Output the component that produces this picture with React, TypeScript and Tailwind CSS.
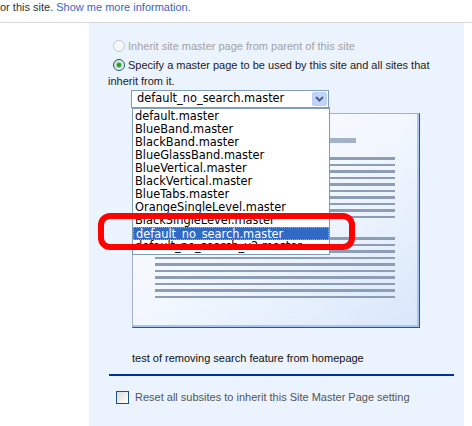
const masters = [
  "default.master",
  "BlueBand.master",
  "BlackBand.master",
  "BlueGlassBand.master",
  "BlueVertical.master",
  "BlackVertical.master",
  "BlueTabs.master",
  "OrangeSingleLevel.master",
  "BlackSingleLevel.master",
  "default_no_search.master",
  "default_no_search_v2.master",
];

function Radio({ checked, disabled }: { checked?: boolean; disabled?: boolean }) {
  return (
    <span
      className={
        "flex h-[12px] w-[12px] shrink-0 items-center justify-center rounded-full border " +
        (disabled
          ? "border-[#c4ccd6] bg-[#f4f6f8]"
          : "border-[#1c5180] bg-gradient-to-br from-[#dcdcd6] to-white")
      }
    >
      {checked && <span className="h-[4px] w-[4px] rounded-full bg-[#21a121] shadow-[0_0_0_1px_#7fcf7f]" />}
    </span>
  );
}

function Lines() {
  return (
    <div className="flex flex-col gap-[4px]">
      {Array.from({ length: 10 }).map((_, i) => (
        <div key={i} className={(i % 2 === 0 ? "h-[3px]" : "h-[2px]") + " w-[240px] bg-[#8e9db6]"} />
      ))}
    </div>
  );
}

export default function App() {
  return (
    <div className="relative h-[426px] w-[472px] overflow-hidden bg-white font-['Liberation_Sans',Arial,sans-serif] text-[11px] text-[#333]">
      <div className="h-[23px] border-b border-[#d6d6d6] leading-[15px]">
        or this site. <span className="text-[#3966bf]">Show me more information.</span>
      </div>

      <div className="flex h-[403px]">
        <div className="w-[89px]" />
        <div className="w-[375px] bg-[#ebf3ff] pt-[15px]">
          <div className="flex h-[16px] items-center pl-[24px] text-[#a2a2a2]">
            <Radio disabled />
            <span className="ml-[3px]">Inherit site master page from parent of this site</span>
          </div>
          <div className="mt-[3px] flex h-[16px] items-center pl-[24px] text-[#222]">
            <Radio checked />
            <span className="ml-[3px]">Specify a master page to be used by this site and all sites that</span>
          </div>
          <div className="h-[16px] pl-[19px] leading-[16px] text-[#222]">inherit from it.</div>

          <div className="relative z-10 ml-[42px] mt-[1px] flex h-[18px] w-[198px] items-center border border-[#7f9db9] bg-white font-['DejaVu_Sans',Verdana,sans-serif] text-[11.4px] text-black">
            <span className="ml-[5px] flex-1">default_no_search.master</span>
            <span className="mr-[1px] flex h-[14px] w-[15px] items-center justify-center rounded-[2px] border border-[#b9cdf6] bg-[#c3d4fb]">
              <svg width="9" height="6" viewBox="0 0 9 6">
                <path d="M1 1 L4.5 4.5 L8 1" fill="none" stroke="#4d6185" strokeWidth="2" />
              </svg>
            </span>
            <div className="absolute left-[0px] top-[16px] w-[198px] border border-t-2 border-[#7f9db9] bg-white py-[1px]">
              {masters.map((m, i) => (
                <div
                  key={m}
                  className={
                    "h-[13px] whitespace-nowrap pl-[2px] leading-[13px] " +
                    (i === 9 ? "border border-dotted border-[#e0a040] bg-[#316ac5] pl-[1px] leading-[11px] text-white" : "")
                  }
                >
                  {m}
                </div>
              ))}
            </div>
          </div>

          <div className="ml-[43px] mt-[5px] flex h-[215px] w-[288px] flex-col border border-b-[#3d5270] border-l-[#9fb3cd] border-r-[#3d5270] border-t-[#9fb3cd] bg-gradient-to-br from-white via-[#f2f7fe] to-[#d9e7fb] pl-[22px] pt-[24px] shadow-[inset_-2px_-2px_0_#aac6ef]">
            <div className="h-[5px] w-[201px] bg-[#a2b2c9]" />
            <div className="mt-[14px]">
              <Lines />
            </div>
            <div className="mt-[19px]">
              <Lines />
            </div>
          </div>

          <div className="ml-[43px] mt-[22px] h-[16px] leading-[16px] text-[#111]">
            test of removing search feature from homepage
          </div>
          <div className="ml-[20px] mt-[8px] h-[2px] w-[345px] bg-[#003399]" />
          <div className="mt-[13px] flex h-[16px] items-center pl-[27px] text-[#555]">
            <span className="h-[13px] w-[13px] border border-[#1c5180] bg-gradient-to-br from-[#dcdcd6] to-white" />
            <span className="ml-[6px]">Reset all subsites to inherit this Site Master Page setting</span>
          </div>
        </div>
      </div>

      <div className="pointer-events-none absolute left-[98px] top-[213px] z-20 h-[37px] w-[257px] rounded-[12px] border-[6px] border-[#ff0000]" />
    </div>
  );
}
